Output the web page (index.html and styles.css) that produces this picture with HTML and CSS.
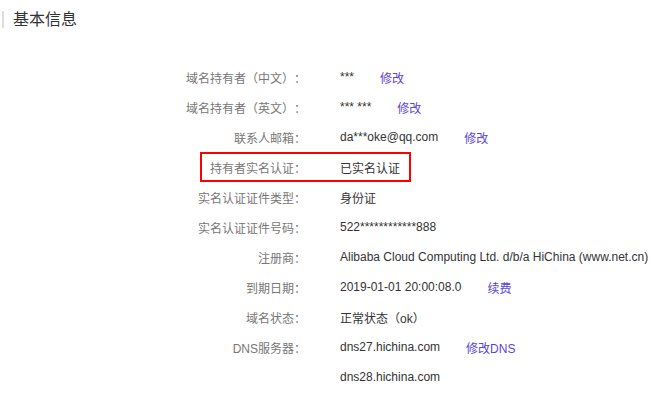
FILE: index.html
```html
<!DOCTYPE html>
<html lang="zh-CN">
<head>
    <meta charset="UTF-8">
    <meta name="viewport" content="width=device-width, initial-scale=1.0">
    <title>基本信息</title>
    <link rel="stylesheet" href="styles.css">
</head>
<body>
    <h2 class="title">基本信息</h2>

    <div class="info">
        <div class="row">
            <span class="label">域名持有者（中文）：</span>
            <span class="value">***</span>
            <a class="link" href="#">修改</a>
        </div>
        <div class="row">
            <span class="label">域名持有者（英文）：</span>
            <span class="value">*** ***</span>
            <a class="link" href="#">修改</a>
        </div>
        <div class="row">
            <span class="label">联系人邮箱：</span>
            <span class="value">da***oke@qq.com</span>
            <a class="link" href="#">修改</a>
        </div>
        <div class="row">
            <!-- highlight frame round the verification row -->
            <div class="mark"></div>
            <span class="label">持有者实名认证：</span>
            <span class="value">已实名认证</span>
        </div>
        <div class="row">
            <span class="label">实名认证证件类型：</span>
            <span class="value">身份证</span>
        </div>
        <div class="row">
            <span class="label">实名认证证件号码：</span>
            <span class="value">522************888</span>
        </div>
        <div class="row">
            <span class="label">注册商：</span>
            <span class="value">Alibaba Cloud Computing Ltd. d/b/a HiChina (www.net.cn)</span>
        </div>
        <div class="row">
            <span class="label">到期日期：</span>
            <span class="value">2019-01-01 20:00:08.0</span>
            <a class="link" href="#">续费</a>
        </div>
        <div class="row">
            <span class="label">域名状态：</span>
            <span class="value">正常状态（ok）</span>
        </div>
        <div class="row">
            <span class="label">DNS服务器：</span>
            <span class="value">dns27.hichina.com</span>
            <a class="link" href="#">修改DNS</a>
        </div>
        <div class="row">
            <span class="label"></span>
            <span class="value">dns28.hichina.com</span>
        </div>
    </div>
</body>
</html>
```

FILE: styles.css
```css
/* page */
body {
    font-family: "Liberation Sans", Arial, "Noto Sans CJK SC", sans-serif;
    font-size: 12px;
    color: #333;
    background-color: #fff;
    margin: 0;
    padding: 0;
    text-spacing-trim: space-all;
}

/* section title with grey bar on the left */
.title {
    margin: 11px 0 0 2px;
    padding-left: 9px;
    border-left: 2px solid #ddd;
    font-size: 16px;
    font-weight: normal;
    line-height: 17px;
    color: #333;
}

/* info list */
.info {
    margin-top: 34px;
}

.row {
    position: relative;
    display: flex;
    align-items: center;
    height: 30px;
}

.label {
    width: 306px;
    flex-shrink: 0;
    text-align: right;
    color: #777;
}

.value {
    margin-left: 34px;
    color: #333;
}

.link {
    margin-left: 26px;
    color: #5a45d8;
    text-decoration: none;
}

/* red frame */
.mark {
    position: absolute;
    left: 200px;
    top: 0;
    width: 207px;
    height: 26px;
    border: 2px solid #f00;
}
```
